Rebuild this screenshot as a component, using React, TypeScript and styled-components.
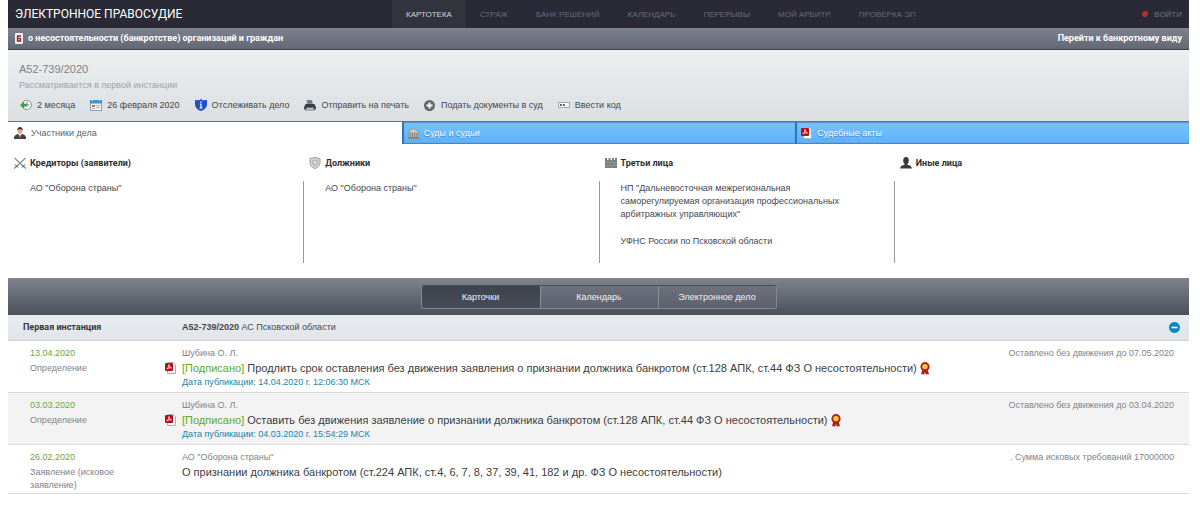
import React from "react";
import styled, { createGlobalStyle } from "styled-components";

const GlobalStyle = createGlobalStyle`
  * { box-sizing: border-box; }
  body {
    margin: 0;
    background: #fff;
    color: #45474d;
    font: 9px/13px "Liberation Sans", Arial, sans-serif;
  }
  button { font: inherit; color: inherit; cursor: pointer; }
  a { color: inherit; text-decoration: none; }
  h1, h2, h3, p, ul { margin: 0; padding: 0; font-weight: normal; }
  ul { list-style: none; }
  svg { display: block; flex: none; }
`;

const Page = styled.div`
  margin: 0 11px 0 8px;
`;

/* ---------- header ---------- */

const Header = styled.header`
  display: grid;
  grid-template-columns: 384px 1fr auto;
  height: 28px;
  background: #292a36;
`;

const Brand = styled.a`
  align-self: center;
  padding-left: 7px;
  color: #fff;
  font: 12px/16px Roboto, "Open Sans", sans-serif;
`;

const Nav = styled.nav`
  display: flex;
`;

const NavLink = styled.a<{ $active?: boolean }>`
  display: flex;
  align-items: center;
  padding: 0 14px;
  font-size: 8px;
  color: ${(p) => (p.$active ? "#d3d4d8" : "#6a6b75")};
  background: ${(p) => (p.$active ? "#32343d" : "transparent")};
`;

const Login = styled.a`
  display: flex;
  align-items: center;
  gap: 6px;
  padding-right: 7px;
  font-size: 8px;
  color: #73747d;
`;

const Dot = styled.span`
  width: 6px;
  height: 6px;
  border-radius: 50%;
  background: #b5302c;
`;

const Banner = styled.div`
  display: flex;
  align-items: center;
  justify-content: space-between;
  height: 22px;
  padding: 0 7px;
  color: #fff;
  font-family: Roboto, Arial, sans-serif;
  font-weight: bold;
  background: linear-gradient(#7e828e, #626874);
  border-bottom: 1px solid #3a3f49;
`;

const BannerTitle = styled.span`
  display: flex;
  align-items: center;
  gap: 5px;
`;

/* ---------- case summary ---------- */

const Summary = styled.section`
  height: 71px;
  padding: 11px 11px 0;
  background: linear-gradient(#efefef, #e6eaec 30%, #dbdfe1);
`;

const CaseNumber = styled.h1`
  font-size: 11px;
  line-height: 16px;
  color: #808286;
`;

const CaseState = styled.p`
  line-height: 16px;
  color: #a0a3a8;
`;

const Actions = styled.ul`
  display: flex;
  gap: 15px;
  padding: 4px 0 0 1px;
`;

const Action = styled.a`
  display: grid;
  grid-template-columns: 12px auto;
  align-items: center;
  justify-items: center;
  gap: 5px;
  height: 16px;
`;

/* ---------- participants ---------- */

const Tabs = styled.div`
  display: grid;
  grid-template-columns: repeat(3, 1fr);
  height: 23px;
  border-top: 1px solid #70757b;
`;

const Tab = styled.button<{ $active?: boolean }>`
  display: flex;
  align-items: center;
  gap: 5px;
  padding: 0 6px;
  border: 0;
  color: ${(p) => (p.$active ? "#5b5f70" : "#fff")};
  text-shadow: ${(p) => (p.$active ? "none" : "0 1px 1px #3f7fb8")};
  background: ${(p) => (p.$active ? "#fff" : "linear-gradient(#78c3ff, #5eb0fb)")};
  box-shadow: ${(p) => (p.$active ? "none" : "inset 2px 0 1px #2f74ae, inset 0 -1px 1px #4b86ba, inset 0 1px 1px #5598d0")};
`;

const Parties = styled.section`
  display: grid;
  grid-template-columns: repeat(4, 1fr);
  height: 134px;
  padding-top: 10px;
`;

const Party = styled.div``;

const PartyTitle = styled.h2`
  display: flex;
  align-items: center;
  gap: 3px;
  height: 18px;
  padding-left: 5px;
  font-family: Roboto, Arial, sans-serif;
  font-size: 9px;
  font-weight: bold;
  color: #2d2e33;
`;

const PartyList = styled.ul<{ $divided: boolean }>`
  height: 82px;
  margin-top: 9px;
  padding: 1px 40px 0 ${(p) => (p.$divided ? 21 : 22)}px;
  border-left: ${(p) => (p.$divided ? "1px solid #9b9b9d" : "0")};

  li + li { margin-top: 14px; }
`;

/* ---------- view switch ---------- */

const SwitchBar = styled.div`
  display: flex;
  justify-content: center;
  align-items: center;
  height: 37px;
  background: linear-gradient(#7f848d, #4c4f5c);
`;

const Switch = styled.div`
  display: grid;
  grid-template-columns: repeat(3, 118px);
  height: 24px;
  border: 1px solid #858995;
  border-top-color: #484c58;
  border-radius: 3px;
  overflow: hidden;
`;

const SwitchButton = styled.button<{ $active?: boolean }>`
  padding: 1px 0 0;
  border: 0;
  border-left: ${(p) => (p.$active ? "0" : "1px solid #8a8e99")};
  color: #f1f1f3;
  background: ${(p) => (p.$active ? "linear-gradient(#3e434d, #474c57)" : "linear-gradient(#6d727d, #5d606d)")};
`;

/* ---------- instance and its documents ---------- */

const InstanceHead = styled.div`
  display: grid;
  grid-template-columns: 174px 1fr auto;
  align-items: center;
  height: 26px;
  padding-right: 8px;
  background: linear-gradient(#e8ecef, #e1e5e9);
  border-bottom: 1px solid #cfd1d3;
`;

const InstanceName = styled.h2`
  padding-left: 15px;
  font-family: Roboto, Arial, sans-serif;
  font-size: 9px;
  font-weight: bold;
  color: #33343a;
`;

const Collapse = styled.button`
  padding: 0;
  border: 0;
  background: none;
`;

const Row = styled.article<{ $shaded?: boolean; $short?: boolean }>`
  display: grid;
  grid-template-columns: 174px 1fr auto;
  height: ${(p) => (p.$short ? 49 : 52)}px;
  padding: 6px 15px 0 0;
  color: #828388;
  background: ${(p) => (p.$shaded ? "#f3f3f3" : "#fff")};
  border-bottom: 1px solid #d9d9d9;
`;

const When = styled.div`
  padding: 0 54px 0 22px;
`;

const DateText = styled.p`
  margin-bottom: 2px;
  color: #68a83a;
`;

const Subject = styled.h3`
  display: flex;
  align-items: center;
  gap: 3px;
  height: 16px;
  font-size: 11px;
  color: #3c3d42;
`;

const FileLink = styled.a`
  margin-left: -17px;
  padding-right: 3px;
`;

const Signed = styled.span`
  color: #5cab20;
`;

const Published = styled.p`
  color: #2383a9;
`;

const Right = styled.p`
  text-align: right;
`;

/* ---------- icons ---------- */

const BookIcon = () => (
  <svg width="8" height="11" viewBox="0 0 8 11">
    <rect width="8" height="11" rx="1" fill="#f4efee" />
    <path d="M6 3H2.5v5h3V5.5h-3" fill="none" stroke="#8b2a26" strokeWidth="1.3" />
  </svg>
);

const HistoryIcon = () => (
  <svg width="12" height="12" viewBox="0 0 12 12">
    <circle cx="6.8" cy="6" r="4.700" fill="#f3f5f3" stroke="#8e9794" />
    <path d="M7 3v3h2.5" fill="none" stroke="#6d7570" strokeWidth=".8" />
    <path d="M0 6.200 4 2.500v2.300h3v2.600H4v2.400z" fill="#3fa04a" />
  </svg>
);

const CalendarIcon = () => (
  <svg width="12" height="12" viewBox="0 0 12 12">
    <rect x=".5" y="1.500" width="11" height="10" fill="#eef3f7" stroke="#8ca3b5" />
    <path d="M0 1h12v3.500H0z" fill="#3d93cf" />
    <path d="M2.500 0v2M9.500 0v2" stroke="#d8ecf8" />
    <path d="M6 6.500h4M6 8.500h4M2 9.500h3" stroke="#a9b4bd" />
    <path d="M2 6h3v2H2z" fill="#dd6b48" />
  </svg>
);

const ShieldInfoIcon = () => (
  <svg width="12" height="12" viewBox="0 0 12 12">
    <path d="M6 0 7.700 1.300 12 1v4c0 3.500-2.500 5.800-6 7C2.500 10.800 0 8.500 0 5V1l4.300.3z" fill="#2350c4" />
    <path d="M6 2.200v1.500M6 4.800V9M4.800 5H6M4.500 9h3" stroke="#fff" strokeWidth="1.200" />
  </svg>
);

const PrinterIcon = () => (
  <svg width="12" height="12" viewBox="0 0 12 12">
    <path d="M2.500 1h5.500l1 4.500H3z" fill="#8b9097" />
    <path d="M3.300 2h4.200M3.500 3.500h4.300" stroke="#5a5f66" strokeWidth=".7" />
    <path d="M1.500 5h9L12 8.500v2H0v-2z" fill="#3a3e44" />
    <path d="M2 8.500h8l1 3H1z" fill="#84898f" />
    <path d="M3 9.800h6" stroke="#e5e8ea" />
  </svg>
);

const PlusIcon = () => (
  <svg width="11" height="11" viewBox="0 0 11 11">
    <circle cx="5.500" cy="5.500" r="5.500" fill="#63676c" />
    <path d="M5.500 2.500v6M2.500 5.500h6" stroke="#fff" strokeWidth="1.800" />
  </svg>
);

const CodeIcon = () => (
  <svg width="12" height="6" viewBox="0 0 12 6">
    <rect x=".5" y=".5" width="11" height="5" fill="#f5f6f6" stroke="#a5a9ac" />
    <circle cx="3" cy="3" r="1" fill="#333" />
    <circle cx="6" cy="3" r="1" fill="#333" />
  </svg>
);

const PersonIcon = () => (
  <svg width="12" height="12" viewBox="0 0 12 12">
    <path d="M0 12c0-3.500 1.500-4.500 4-5h4c2.500.5 4 1.500 4 5z" fill="#3d4148" />
    <path d="m4.300 7 1.700 4 1.700-4z" fill="#fff" />
    <path d="M5.500 8h1l.3 3.500h-1.600z" fill="#a8342b" />
    <ellipse cx="6" cy="4" rx="2.300" ry="3.100" fill="#e2ad82" />
    <path d="M3.500 4C3 1 4.300 0 6 0s3 1 2.500 4C8 2.500 7 2.300 6 2.300S4 2.500 3.500 4z" fill="#4a3020" />
  </svg>
);

const CourtIcon = () => (
  <svg width="11" height="11" viewBox="0 0 11 11">
    <path d="M0 4 5.500.3 11 4v1H0z" fill="#d4cdbd" stroke="#827b6d" strokeWidth=".6" />
    <path d="M1 5h9v4H1z" fill="#c6bfae" />
    <path d="M2 5v4M4.300 5v4M6.700 5v4M9 5v4" stroke="#766e60" strokeWidth=".9" />
    <path d="M0 9h11v2H0z" fill="#8f887a" />
  </svg>
);

const PdfIcon = () => (
  <svg width="11" height="12" viewBox="0 0 11 12">
    <path d="M2.500.5h6l2 2v9h-8z" fill="#fafafa" stroke="#b0b0b0" />
    <rect width="8" height="8" y="1" rx="1" fill="#b70f17" />
    <path d="M1.800 7C3.500 5.500 4 4 4 2.500 4.300 4.500 5 5.500 6.500 6 5 5.500 3.300 6 1.800 7z" fill="none" stroke="#fff" strokeWidth=".8" />
  </svg>
);

const SwordsIcon = () => (
  <svg width="14" height="12" viewBox="0 0 14 12">
    <path d="m1.500 1 9.500 9M12.500 1 3 10" stroke="#8a8d92" strokeWidth="1.200" />
    <path d="m2 7.500 3 3M12 7.500l-3 3M3.300 9.300 1 11.500M10.700 9.300l2.300 2.200" stroke="#3f4146" strokeWidth="1" />
  </svg>
);

const ShieldIcon = () => (
  <svg width="14" height="12" viewBox="0 0 14 12">
    <path d="M7 .5 12 1.500v4c0 3-2 5-5 6-3-1-5-3-5-6v-4z" fill="#d7d8da" stroke="#9b9da0" />
    <path d="M7 2.500 10.300 3v2.500c0 2-1.300 3.200-3.300 4-2-.8-3.300-2-3.300-4V3z" fill="#b9bbbe" />
    <circle cx="7" cy="5.500" r="1.400" fill="#dedfe0" />
  </svg>
);

const WallIcon = () => (
  <svg width="14" height="12" viewBox="0 0 14 12">
    <path d="M1 1h2v2h1.500V1h2v2H8V1h2v2h1V1h2v10H1z" fill="#7b7c7f" />
    <path d="M1 5.500h12M1 8.500h12M4 3v2.500M8 3v2.500M6 5.500v3M10.500 5.500v3M4 8.500V11M8 8.500V11" stroke="#a2a3a5" strokeWidth=".6" />
  </svg>
);

const SilhouetteIcon = () => (
  <svg width="14" height="12" viewBox="0 0 14 12">
    <ellipse cx="7" cy="3.600" rx="2.800" ry="3.500" fill="#393a3d" />
    <path d="M5.500 6h3v2c3 .3 4 1 4.300 3.500H1.200C1.500 9 2.500 8.300 5.500 8z" fill="#393a3d" />
  </svg>
);

const MinusIcon = () => (
  <svg width="13" height="13" viewBox="0 0 13 13">
    <circle cx="6.500" cy="6.500" r="6" fill="#0f86c2" stroke="#e9f5fb" />
    <path d="M3.500 6.500h6" stroke="#fff" strokeWidth="1.600" />
  </svg>
);

const MedalIcon = () => (
  <svg width="10" height="13" viewBox="0 0 10 13">
    <path d="M2.500 7 1 12.500l2-.5 1 1 1-3 1 3 1-1 2 .5L7.500 7z" fill="#a71d1c" />
    <circle cx="5" cy="4.700" r="4.600" fill="#b3211e" />
    <circle cx="5" cy="4.600" r="2.700" fill="#fdc93a" />
  </svg>
);

/* ---------- content ---------- */

const navItems = ["КАРТОТЕКА", "СТРАЖ", "БАНК РЕШЕНИЙ", "КАЛЕНДАРЬ", "ПЕРЕРЫВЫ", "МОЙ АРБИТР", "ПРОВЕРКА ЭП"];

const actions = [
  { icon: <HistoryIcon />, text: "2 месяца" },
  { icon: <CalendarIcon />, text: "26 февраля 2020" },
  { icon: <ShieldInfoIcon />, text: "Отслеживать дело" },
  { icon: <PrinterIcon />, text: "Отправить на печать" },
  { icon: <PlusIcon />, text: "Подать документы в суд" },
  { icon: <CodeIcon />, text: "Ввести код" },
];

const tabs = [
  { icon: <PersonIcon />, text: "Участники дела" },
  { icon: <CourtIcon />, text: "Суды и судьи" },
  { icon: <PdfIcon />, text: "Судебные акты" },
];

const parties = [
  { icon: <SwordsIcon />, title: "Кредиторы (заявители)", names: ['АО "Оборона страны"'] },
  { icon: <ShieldIcon />, title: "Должники", names: ['АО "Оборона страны"'] },
  {
    icon: <WallIcon />,
    title: "Третьи лица",
    names: [
      'НП "Дальневосточная межрегиональная саморегулируемая организация профессиональных арбитражных управляющих"',
      "УФНС России по Псковской области",
    ],
  },
  { icon: <SilhouetteIcon />, title: "Иные лица", names: [] },
];

const documents = [
  {
    date: "13.04.2020",
    kind: "Определение",
    author: "Шубина О. Л.",
    text: "Продлить срок оставления без движения заявления о признании должника банкротом (ст.128 АПК, ст.44 ФЗ О несостоятельности)",
    published: "14.04.2020 г. 12:06:30 МСК",
    note: "Оставлено без движения до 07.05.2020",
  },
  {
    date: "03.03.2020",
    kind: "Определение",
    author: "Шубина О. Л.",
    text: "Оставить без движения заявление о признании должника банкротом (ст.128 АПК, ст.44 ФЗ О несостоятельности)",
    published: "04.03.2020 г. 15:54:29 МСК",
    note: "Оставлено без движения до 03.04.2020",
  },
  {
    date: "26.02.2020",
    kind: "Заявление (исковое заявление)",
    author: 'АО "Оборона страны"',
    text: "О признании должника банкротом (ст.224 АПК, ст.4, 6, 7, 8, 37, 39, 41, 182 и др. ФЗ О несостоятельности)",
    note: ". Сумма исковых требований 17000000",
  },
];

export default function App() {
  return (
    <>
      <GlobalStyle />
      <Page>
        <Header>
          <Brand href="#">ЭЛЕКТРОННОЕ ПРАВОСУДИЕ</Brand>
          <Nav>
            {navItems.map((item, i) => (
              <NavLink key={item} href="#" $active={i === 0}>{item}</NavLink>
            ))}
          </Nav>
          <Login href="#"><Dot />ВОЙТИ</Login>
        </Header>
        <Banner>
          <BannerTitle><BookIcon />о несостоятельности (банкротстве) организаций и граждан</BannerTitle>
          <a href="#">Перейти к банкротному виду</a>
        </Banner>

        <Summary>
          <CaseNumber>А52-739/2020</CaseNumber>
          <CaseState>Рассматривается в первой инстанции</CaseState>
          <Actions>
            {actions.map((a) => (
              <li key={a.text}><Action href="#">{a.icon}{a.text}</Action></li>
            ))}
          </Actions>
        </Summary>

        <Tabs role="tablist">
          {tabs.map((t, i) => (
            <Tab key={t.text} role="tab" aria-selected={i === 0} $active={i === 0}>{t.icon}{t.text}</Tab>
          ))}
        </Tabs>
        <Parties>
          {parties.map((p, i) => (
            <Party key={p.title}>
              <PartyTitle>{p.icon}{p.title}</PartyTitle>
              <PartyList $divided={i > 0}>
                {p.names.map((n) => <li key={n}>{n}</li>)}
              </PartyList>
            </Party>
          ))}
        </Parties>

        <SwitchBar>
          <Switch>
            <SwitchButton $active>Карточки</SwitchButton>
            <SwitchButton>Календарь</SwitchButton>
            <SwitchButton>Электронное дело</SwitchButton>
          </Switch>
        </SwitchBar>

        <InstanceHead>
          <InstanceName>Первая инстанция</InstanceName>
          <span><b>А52-739/2020</b> АС Псковской области</span>
          <Collapse aria-label="Свернуть"><MinusIcon /></Collapse>
        </InstanceHead>
        {documents.map((d, i) => (
          <Row key={d.date} $shaded={i === 1} $short={!d.published}>
            <When>
              <DateText>{d.date}</DateText>
              <p>{d.kind}</p>
            </When>
            <div>
              <p>{d.author}</p>
              <Subject>
                {d.published && <FileLink href="#" aria-label="PDF"><PdfIcon /></FileLink>}
                {d.published && <Signed>[Подписано]</Signed>}
                <span>{d.text}</span>
                {d.published && <MedalIcon />}
              </Subject>
              {d.published && <Published>Дата публикации: {d.published}</Published>}
            </div>
            <Right>{d.note}</Right>
          </Row>
        ))}
      </Page>
    </>
  );
}
